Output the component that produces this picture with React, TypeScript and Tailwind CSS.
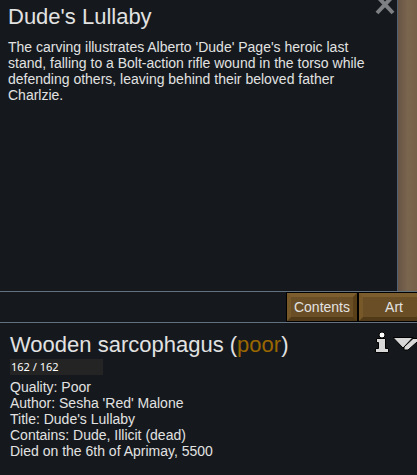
const ART_TEXT =
    "The carving illustrates Alberto 'Dude' Page's heroic last stand, falling to a Bolt-action rifle wound in the torso while defending others, leaving behind their beloved father Charlzie.";

const TABS = ['Contents', 'Art'];

const DETAILS = [
    'Quality: Poor',
    "Author: Sesha 'Red' Malone",
    "Title: Dude's Lullaby",
    'Contains: Dude, Illicit (dead)',
    'Died on the 6th of Aprimay, 5500',
];

function CloseIcon() {
    return (
        <svg width="20" height="18" viewBox="0 0 20 18" aria-hidden="true">
            <path d="M2 -4L18 13M18 -4L2 13" stroke="#7d7f82" strokeWidth="4" fill="none" />
        </svg>
    );
}

function InfoIcon() {
    return (
        <svg width="16" height="24" viewBox="0 0 16 24" aria-hidden="true">
            <path
                d="M3.5 7.5H12.5V17.5H15.5V21.5H2.5V17.5H5.5V11.5H3.5Z"
                fill="#d8d8d8"
                stroke="#000"
                strokeWidth="1"
            />
            <circle cx="9" cy="4" r="3" fill="#fff" stroke="#000" strokeWidth="1" />
        </svg>
    );
}

function RenameIcon() {
    return (
        <svg width="30" height="16" viewBox="0 0 30 16" aria-hidden="true">
            <path d="M0 0.5H20L10 11Z" fill="#d8d8d8" stroke="#000" strokeWidth="1" />
            <path d="M11 10L20 1.5H28L15 13H11Z" fill="#d8d8d8" stroke="#000" strokeWidth="1" />
        </svg>
    );
}

function ArtPanel() {
    return (
        <div className="flex grow bg-[#776450]">
            <section className="grow border-r border-[#526274] bg-[#15191d] px-2 pt-1">
                <div className="flex items-start justify-between">
                    <h1 className="text-[22px] leading-[26px]">Dude's Lullaby</h1>
                    <button type="button" aria-label="Close" className="-mt-1 -mr-[6px]">
                        <CloseIcon />
                    </button>
                </div>
                <p className="mt-[9px] text-sm leading-4">{ART_TEXT}</p>
            </section>
            <div className="w-[19px] shrink-0 bg-[linear-gradient(90deg,#675443,#7a654f_50%,#766049)]" />
        </div>
    );
}

function TabBar() {
    return (
        <nav className="flex h-8 justify-end overflow-hidden border-y border-[#64727f] bg-[#15191d]">
            <div className="-mr-[13px] flex bg-black py-px">
                {TABS.map(tab => (
                    <button
                        key={tab}
                        type="button"
                        className="mx-px w-[70px] border-4 border-t-[#7b5d2e] border-r-[#594019] border-b-[#513a18] border-l-[#765829] bg-[#6a4e26] text-sm leading-4 whitespace-nowrap"
                    >
                        <span className="-mx-1">{tab}</span>
                    </button>
                ))}
            </div>
        </nav>
    );
}

function InspectPane() {
    return (
        <section className="overflow-hidden bg-[#15191d] px-[10px] pt-[9px] pb-4">
            <div className="flex items-start justify-between">
                <h2 className="text-[22px] leading-[26px] whitespace-nowrap">
                    Wooden sarcophagus (<span className="text-[#996600]">poor</span>)
                </h2>
                <div className="-mr-4 flex shrink-0 items-start gap-1">
                    <button type="button" aria-label="Information" className="-mt-px">
                        <InfoIcon />
                    </button>
                    <button type="button" aria-label="Rename" className="mt-[5px]">
                        <RenameIcon />
                    </button>
                </div>
            </div>
            <div className="mt-px h-4 w-[93px] bg-[#242424] pl-px font-['Noto_Sans',sans-serif] text-[11px] leading-4 text-white">
                162 / 162
            </div>
            <ul className="mt-1 text-sm leading-4">
                {DETAILS.map(line => (
                    <li key={line}>{line}</li>
                ))}
            </ul>
        </section>
    );
}

export default function App() {
    return (
        <main className="flex min-h-screen flex-col bg-[#15191d] font-['Liberation_Sans',Arial,sans-serif] text-[#e2e2e2]">
            <ArtPanel />
            <TabBar />
            <InspectPane />
        </main>
    );
}
